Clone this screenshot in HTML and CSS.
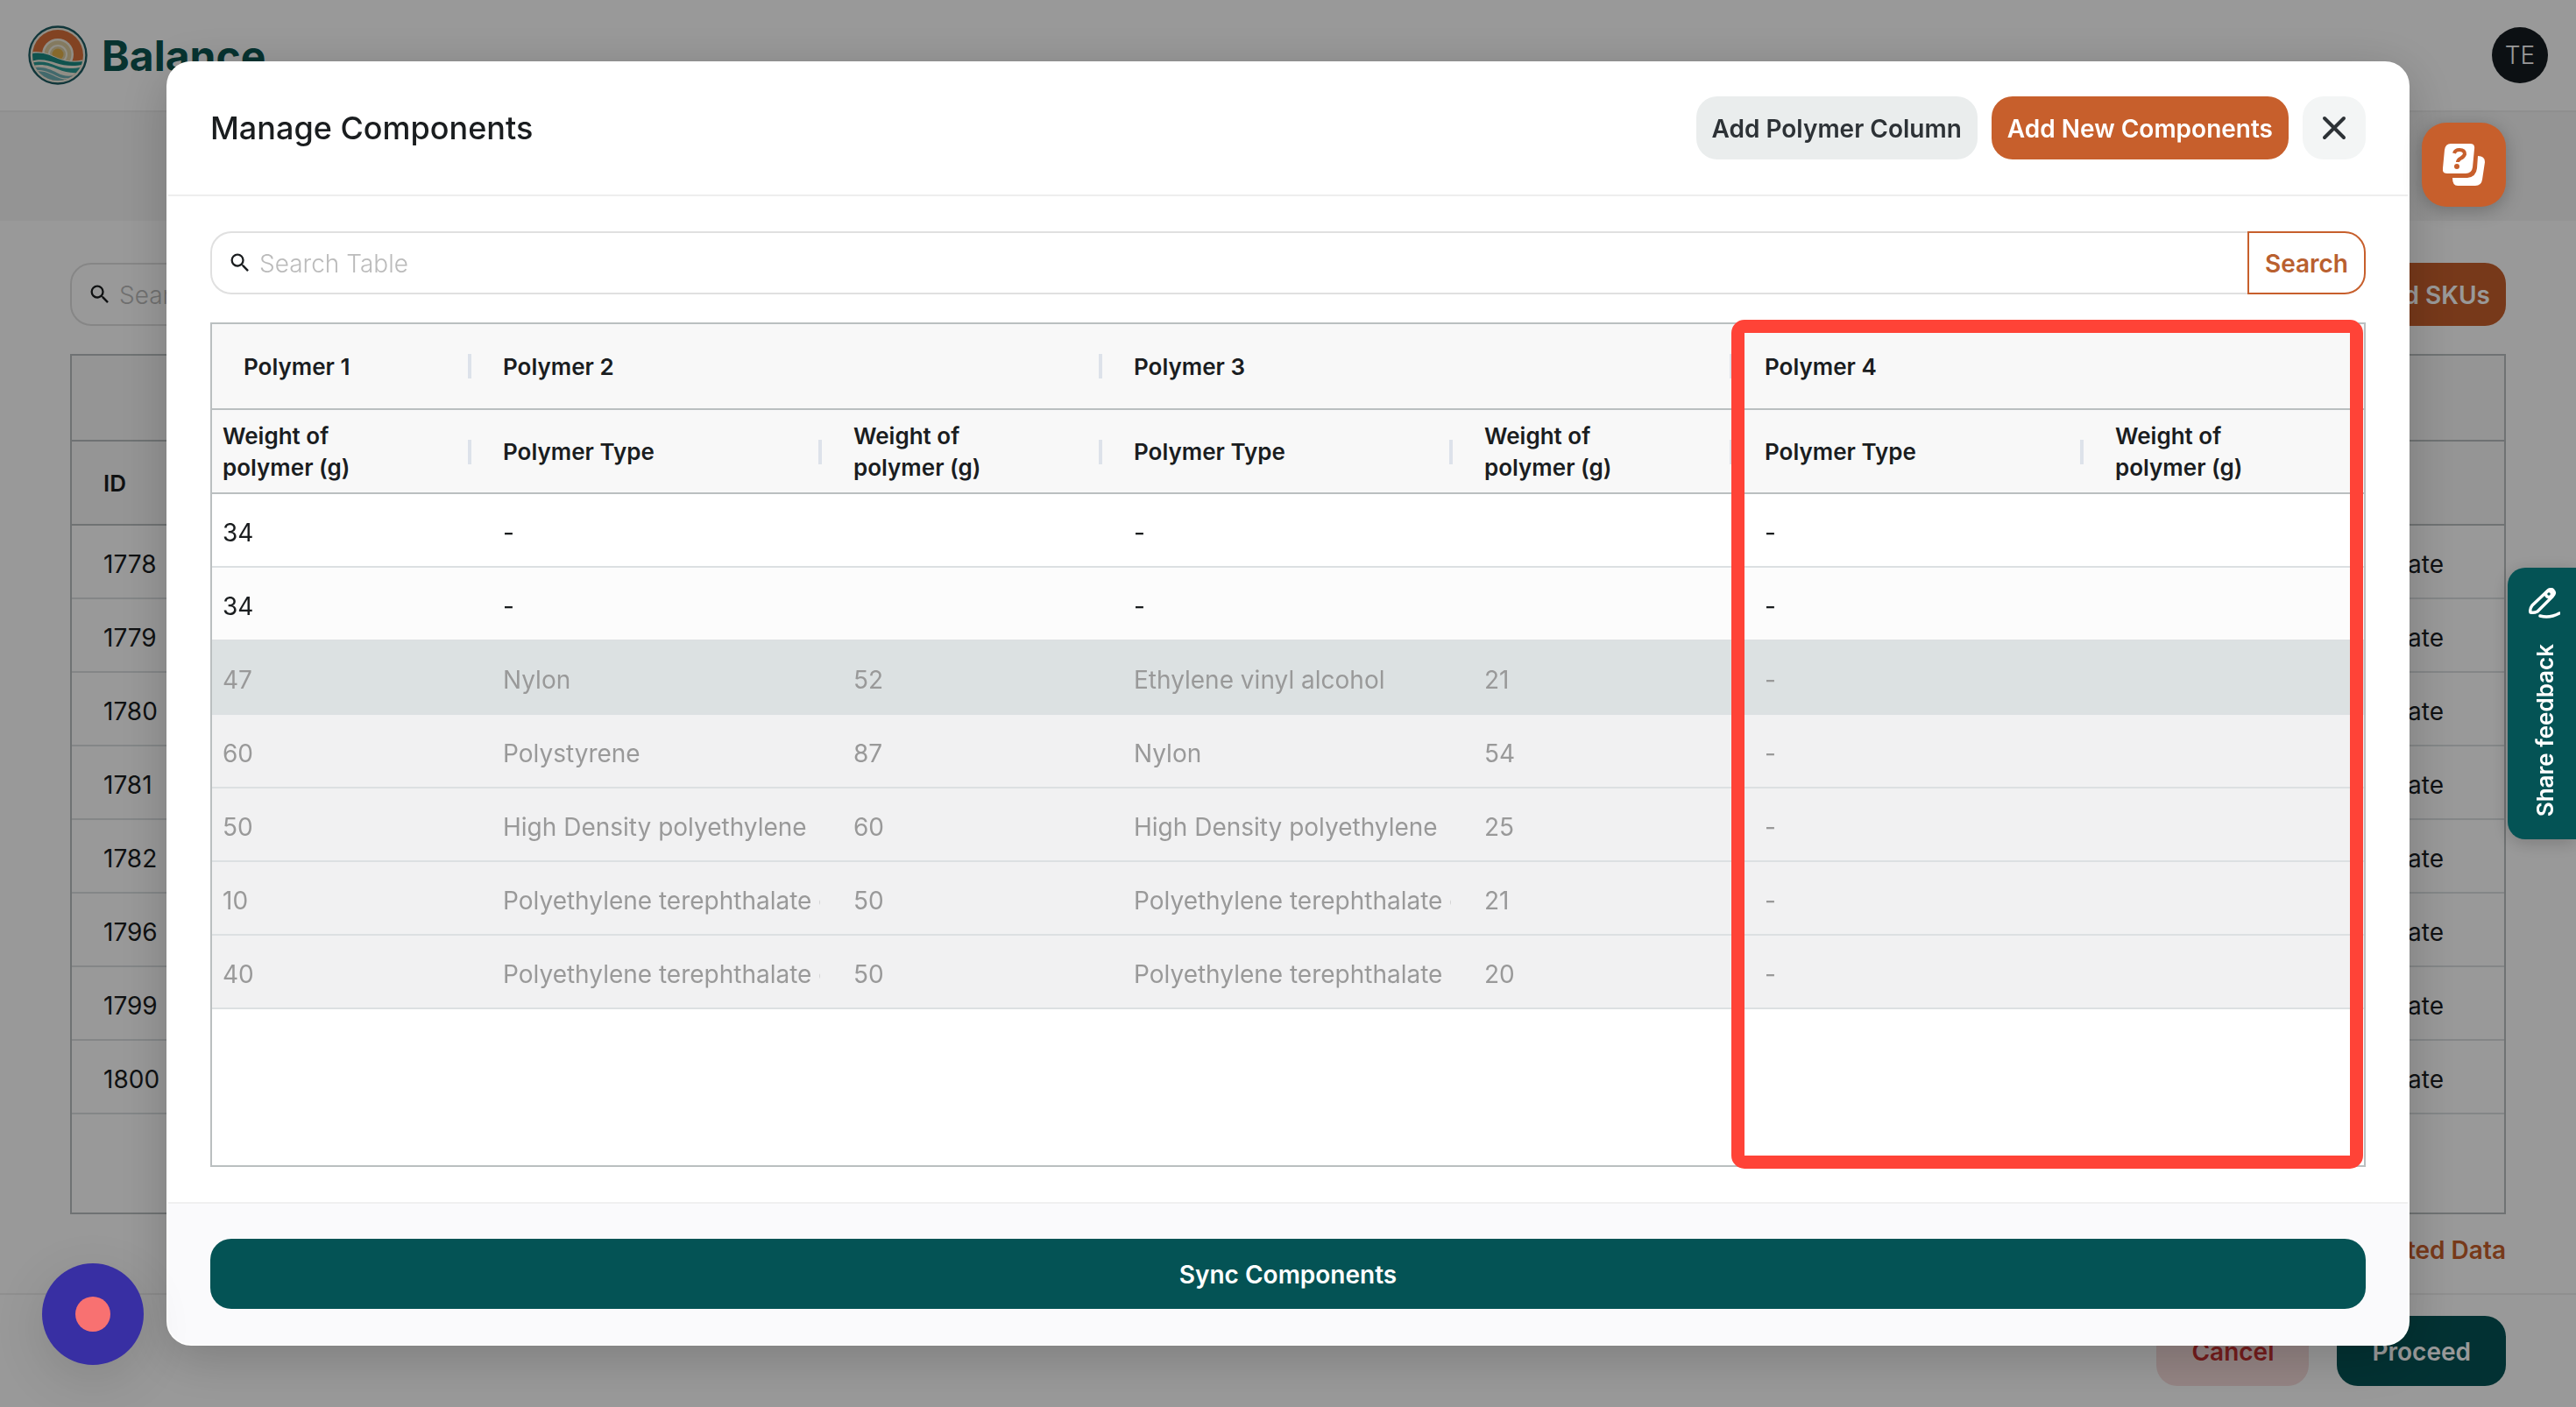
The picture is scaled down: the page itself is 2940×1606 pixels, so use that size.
FILE: index.html
```html
<!DOCTYPE html>
<html lang="en">
<head>
  <meta charset="UTF-8">
  <meta name="viewport" content="width=device-width, initial-scale=1.0">
  <title>Balance - Manage Components</title>
  <link rel="stylesheet" href="styles.css">
</head>
<body>
  <div class="page">
    <header class="topbar">
      <a class="brand" href="#">
        <svg class="brand-logo" viewBox="0 0 68 68" aria-hidden="true">
          <defs>
            <clipPath id="disc"><circle cx="34" cy="34" r="29"/></clipPath>
          </defs>
          <circle cx="34" cy="34" r="32.5" fill="#f1ede0" stroke="#1d5c63" stroke-width="2.4"/>
          <g clip-path="url(#disc)">
            <rect width="68" height="68" fill="#d9713a"/>
            <circle cx="34" cy="33" r="18" fill="#f1ede0"/>
            <circle cx="34" cy="33" r="15.5" fill="#dccb9f"/>
            <circle cx="34" cy="33" r="11" fill="#f1ede0"/>
            <circle cx="34" cy="33" r="9" fill="#dccb9f"/>
            <circle cx="34" cy="33" r="6.5" fill="#e2b04a"/>
            <path d="M0 31C16 28 24 33 34 37S54 42 68 38V68H0Z" fill="#f1ede0"/>
            <path d="M0 33C16 29 24 34 34 38S54 43 68 40V43C54 48 42 46 32 43S14 37 0 42Z" fill="#1c8a83"/>
            <path d="M0 44C14 39 22 42 32 46S52 50 68 46V52C54 56 44 54 34 50S16 43 0 47Z" fill="#2b9a93"/>
            <path d="M0 50C12 45 24 49 33 54S48 58 60 56V68H0Z" fill="#6fb0b5"/>
            <path d="M4 53C14 49 24 54 32 58S44 61 54 60" fill="none" stroke="#f1ede0" stroke-width="1.2"/>
          </g>
        </svg>
        <span>Balance</span>
      </a>
      <button class="avatar" type="button">TE</button>
    </header>
    <div class="subbar"></div>

    <main class="content">
      <div class="toolbar">
        <div class="search">
          <div class="search-field">
            <svg class="search-icon" viewBox="0 0 24 24" aria-hidden="true"><path d="M15.5 14h-.79l-.28-.27A6.47 6.47 0 0 0 16 9.500 6.500 6.500 0 1 0 9.500 16c1.610 0 3.090-.59 4.230-1.570l.27.28v.79l5 4.990L20.490 19zm-6 0C7.010 14 5 11.990 5 9.500S7.010 5 9.500 5 14 7.010 14 9.500 11.990 14 9.500 14z"/></svg>
            <input type="text" placeholder="Search Table" aria-label="Search SKUs">
          </div>
        </div>
        <button class="btn btn-orange" type="button">Add SKUs</button>
      </div>

      <div class="table-wrap">
        <table class="grid sku-grid">
          <thead>
            <tr><th></th><th></th></tr>
            <tr><th>ID</th><th></th></tr>
          </thead>
          <tbody>
            <tr><td>1778</td><td>Update</td></tr>
            <tr><td>1779</td><td>Update</td></tr>
            <tr><td>1780</td><td>Update</td></tr>
            <tr><td>1781</td><td>Update</td></tr>
            <tr><td>1782</td><td>Update</td></tr>
            <tr><td>1796</td><td>Update</td></tr>
            <tr><td>1799</td><td>Update</td></tr>
            <tr><td>1800</td><td>Update</td></tr>
          </tbody>
        </table>
      </div>
      <a class="data-link" href="#">Deleted Data</a>
    </main>

    <footer class="page-footer">
      <button class="btn btn-large btn-cancel" type="button">Cancel</button>
      <button class="btn btn-large btn-green" type="button">Proceed</button>
    </footer>
  </div>

  <div class="overlay">
    <div class="modal" role="dialog" aria-modal="true" aria-labelledby="modal-title">
      <div class="modal-header">
        <h1 id="modal-title">Manage Components</h1>
        <div class="modal-actions">
          <button class="btn btn-light" type="button">Add Polymer Column</button>
          <button class="btn btn-orange" type="button">Add New Components</button>
          <button class="btn-close" type="button" aria-label="Close">
            <svg viewBox="0 0 28 28" aria-hidden="true"><path d="M3 3L25 25M25 3L3 25"/></svg>
          </button>
        </div>
      </div>

      <div class="modal-body">
        <div class="search">
          <div class="search-field attached">
            <svg class="search-icon" viewBox="0 0 24 24" aria-hidden="true"><path d="M15.5 14h-.79l-.28-.27A6.47 6.47 0 0 0 16 9.500 6.500 6.500 0 1 0 9.500 16c1.610 0 3.090-.59 4.230-1.570l.27.28v.79l5 4.990L20.490 19zm-6 0C7.010 14 5 11.990 5 9.500S7.010 5 9.500 5 14 7.010 14 9.500 11.990 14 9.500 14z"/></svg>
            <input type="text" placeholder="Search Table" aria-label="Search components">
          </div>
          <button class="btn btn-search" type="button">Search</button>
        </div>

        <div class="table-wrap">
          <table class="grid component-grid">
            <colgroup>
              <col class="col-first">
              <col class="col-type"><col class="col-weight">
              <col class="col-type"><col class="col-weight">
              <col class="col-type"><col>
            </colgroup>
            <thead>
              <tr>
                <th class="group-first">Polymer 1</th>
                <th colspan="2">Polymer 2</th>
                <th colspan="2">Polymer 3</th>
                <th colspan="2">Polymer 4</th>
              </tr>
              <tr>
                <th>Weight of<br>polymer (g)</th>
                <th>Polymer Type</th>
                <th>Weight of<br>polymer (g)</th>
                <th>Polymer Type</th>
                <th>Weight of<br>polymer (g)</th>
                <th>Polymer Type</th>
                <th>Weight of<br>polymer (g)</th>
              </tr>
            </thead>
            <tbody>
              <tr><td>34</td><td>-</td><td></td><td>-</td><td></td><td>-</td><td></td></tr>
              <tr class="even"><td>34</td><td>-</td><td></td><td>-</td><td></td><td>-</td><td></td></tr>
              <tr class="disabled hovered"><td>47</td><td>Nylon</td><td>52</td><td>Ethylene vinyl alcohol</td><td>21</td><td>-</td><td></td></tr>
              <tr class="disabled"><td>60</td><td>Polystyrene</td><td>87</td><td>Nylon</td><td>54</td><td>-</td><td></td></tr>
              <tr class="disabled"><td>50</td><td>High Density polyethylene</td><td>60</td><td>High Density polyethylene</td><td>25</td><td>-</td><td></td></tr>
              <tr class="disabled"><td>10</td><td>Polyethylene terephthalate g</td><td>50</td><td>Polyethylene terephthalate g</td><td>21</td><td>-</td><td></td></tr>
              <tr class="disabled"><td>40</td><td>Polyethylene terephthalate g</td><td>50</td><td>Polyethylene terephthalate</td><td>20</td><td>-</td><td></td></tr>
            </tbody>
          </table>
          <div class="highlight"></div>
        </div>
      </div>

      <div class="modal-footer">
        <button class="btn btn-large btn-green" type="button">Sync Components</button>
      </div>
    </div>
  </div>

  <button class="help-button" type="button" aria-label="Help">
    <svg viewBox="0 0 48 48" aria-hidden="true">
      <path d="M9 0H31Q37 0 36 6L34 27Q33 34 26 34H5Q-1 34 0 28L2 7Q3 0 9 0Z" fill="#fff"/>
      <path d="M40 14Q48 14 48 21L45 41Q44 48 37 48H17Q11 48 11 39H28Q38 38 39 28Z" fill="#fff"/>
      <path d="M13 11Q14 7 19 7Q25 7 25 12Q24 15 20 17Q17 19 17 21" fill="none" stroke="#c75f2c" stroke-width="4"/>
      <circle cx="16" cy="26" r="3" fill="#c75f2c"/>
    </svg>
  </button>

  <button class="feedback-tab" type="button">
    <svg viewBox="0 0 36 36" aria-hidden="true">
      <path d="M22 3Q26 0 28 3Q31 6 27 10L10 27Q6 29 2 28Q1 24 4 20Z"/>
      <circle cx="23" cy="7" r="3.500"/>
      <path d="M13 32Q24 35 35 29"/>
    </svg>
    <span>Share feedback</span>
  </button>

  <button class="record-button" type="button" aria-label="Record"><span></span></button>
</body>
</html>
```
FILE: styles.css
```css
* {
  box-sizing: border-box;
}
body {
  margin: 0;
  font-family: Inter, "Open Sans", sans-serif;
  font-size: 28px;
  color: #1a1d1f;
  background-color: #fff;
}
button, input {
  font-family: inherit;
  font-size: inherit;
}
button {
  border: none;
  padding: 0;
  cursor: pointer;
}
.page {
  display: flex;
  flex-direction: column;
  height: 100vh;
}
.topbar {
  display: flex;
  align-items: center;
  justify-content: space-between;
  height: 128px;
  padding: 0 32px;
  border-bottom: 2px solid #eee;
}
.brand {
  display: flex;
  align-items: center;
  gap: 16px;
  font-size: 48px;
  font-weight: 700;
  color: #0c5551;
  text-decoration: none;
}
.brand-logo {
  width: 68px;
  height: 68px;
}
.avatar {
  width: 64px;
  height: 64px;
  border-radius: 50%;
  background-color: #151c20;
  color: #fff;
  font-weight: 300;
}
.subbar {
  height: 124px;
  background-color: #f7f7f7;
}
.content {
  flex: 1;
  display: flex;
  flex-direction: column;
  padding: 48px 80px 28px;
}
.toolbar {
  display: flex;
  justify-content: space-between;
  gap: 32px;
  margin-bottom: 32px;
}
.search {
  display: flex;
  flex: 1;
}
.search-field {
  flex: 1;
  display: flex;
  align-items: center;
  gap: 8px;
  height: 72px;
  padding: 0 18px;
  border: 2px solid #e0e0e0;
  border-radius: 24px;
}
.search-field.attached {
  border-right: none;
  border-radius: 24px 0 0 24px;
}
.search-icon {
  width: 28px;
  height: 28px;
  fill: #1a1d1f;
}
.search-field input {
  flex: 1;
  border: none;
  outline: none;
  padding: 2px 0 0;
  background: transparent;
  font-weight: 300;
}
.search-field input::placeholder {
  color: #bbb;
}
.btn {
  height: 72px;
  padding: 2px 18px 0;
  border-radius: 24px;
  font-weight: 600;
  white-space: nowrap;
}
.btn-large {
  height: 80px;
  padding: 2px 40px 0;
}
.btn-orange {
  background-color: #c75f2c;
  color: #fff;
}
.btn-light {
  background-color: #eaeded;
  color: #2d3236;
}
.btn-green {
  background-color: #045355;
  color: #fff;
}
.btn-cancel {
  background-color: #f6dcdb;
  color: #c22f2f;
}
.btn-search {
  border: 2px solid #c75f2c;
  border-radius: 0 24px 24px 0;
  background-color: #fff;
  color: #b9602f;
}

/* tables */
.table-wrap {
  position: relative;
  flex: 1;
  border: 2px solid #babfc0;
}
.grid {
  width: 100%;
  border-spacing: 0;
  table-layout: fixed;
}
.grid th {
  position: relative;
  height: 96px;
  padding: 2px 0 0 38px;
  border-bottom: 2px solid #babfc0;
  background-color: #f8f8f8;
  font-size: 26px;
  font-weight: 600;
  line-height: 36px;
  text-align: left;
}
.grid tr:first-child th {
  height: 98px;
}
.grid td {
  height: 84px;
  padding: 6px 0 0 38px;
  border-bottom: 2px solid #dce0e2;
  line-height: 40px;
  overflow: hidden;
  white-space: nowrap;
}
.sku-grid th, .sku-grid td {
  padding-left: 36px;
}
.sku-grid td:last-child {
  padding-right: 69px;
  text-align: right;
}
.component-grid th:not(:last-child)::after {
  content: "";
  position: absolute;
  top: 34px;
  right: -2px;
  width: 4px;
  height: 28px;
  background-color: #dde2ea;
  z-index: 1;
}
.component-grid th:first-child, .component-grid td:first-child {
  padding-left: 12px;
}
.component-grid .group-first:first-child {
  padding-left: 36px;
}
.col-first {
  width: 294px;
}
.col-type {
  width: 400px;
}
.col-weight {
  width: 320px;
}
.even td {
  background-color: #fcfcfc;
}
.disabled td {
  background-color: #f1f1f2;
  color: #999;
}
.hovered td {
  background-color: #dce1e2;
}
.highlight {
  position: absolute;
  top: -5px;
  right: 1px;
  bottom: -4px;
  left: 1734px;
  border: 15px solid #ff4337;
  border-radius: 15px;
  z-index: 2;
}
.data-link {
  align-self: flex-end;
  margin-top: 20px;
  line-height: 42px;
  font-weight: 600;
  color: #c75f2c;
  text-decoration: none;
}
.page-footer {
  display: flex;
  justify-content: flex-end;
  gap: 32px;
  padding: 24px 80px;
  border-top: 2px solid #eee;
}

/* modal */
.overlay {
  position: fixed;
  inset: 0;
  display: flex;
  padding: 70px 190px;
  background-color: rgba(0, 0, 0, 0.4);
}
.modal {
  flex: 1;
  display: flex;
  flex-direction: column;
  border: 2px solid #fff;
  border-radius: 28px;
  background-color: #fff;
  box-shadow: 0 12px 60px rgba(0, 0, 0, 0.2);
  overflow: hidden;
}
.modal-header {
  display: flex;
  align-items: center;
  justify-content: space-between;
  padding: 38px 48px 40px;
  border-bottom: 2px solid #eee;
}
.modal-header h1 {
  margin: 0;
  font-size: 36px;
  font-weight: 500;
}
.modal-actions {
  display: flex;
  gap: 16px;
}
.btn-close {
  display: flex;
  align-items: center;
  justify-content: center;
  width: 72px;
  height: 72px;
  border-radius: 24px;
  background-color: #f3f5f5;
}
.btn-close svg {
  width: 28px;
  height: 28px;
  fill: none;
  stroke: #2d3236;
  stroke-width: 4;
  stroke-linecap: round;
}
.modal-body {
  flex: 1;
  display: flex;
  flex-direction: column;
  gap: 32px;
  padding: 40px 48px;
}
.modal-body .search {
  flex: none;
}
.modal-footer {
  display: flex;
  padding: 40px 48px;
  border-top: 2px solid #f0f0f0;
  background-color: #fafafc;
}
.modal-footer .btn {
  flex: 1;
}

/* floating widgets */
.help-button {
  position: fixed;
  top: 140px;
  right: 80px;
  display: flex;
  align-items: center;
  justify-content: center;
  width: 96px;
  height: 96px;
  border-radius: 28px;
  background-color: #c75f2c;
  box-shadow: 0 4px 20px rgba(0, 0, 0, 0.25);
}
.help-button svg {
  width: 48px;
  height: 48px;
}
.feedback-tab {
  position: fixed;
  top: 648px;
  right: 0;
  display: flex;
  flex-direction: column;
  align-items: center;
  gap: 28px;
  width: 78px;
  height: 310px;
  padding: 23px 0 0 6px;
  border-radius: 20px 0 0 20px;
  background-color: #045355;
  color: #fff;
  font-size: 26px;
  font-weight: 600;
  box-shadow: 0 4px 20px rgba(0, 0, 0, 0.2);
}
.feedback-tab svg {
  width: 36px;
  height: 36px;
  fill: none;
  stroke: #fff;
  stroke-width: 3.5;
  stroke-linecap: round;
  stroke-linejoin: round;
}
.feedback-tab span {
  writing-mode: vertical-rl;
  transform: rotate(180deg);
}
.record-button {
  position: fixed;
  bottom: 48px;
  left: 48px;
  display: flex;
  align-items: center;
  justify-content: center;
  width: 116px;
  height: 116px;
  border-radius: 50%;
  background-color: #382fa3;
  box-shadow: 0 16px 60px rgba(0, 0, 0, 0.12);
}
.record-button span {
  width: 40px;
  height: 40px;
  border-radius: 50%;
  background-color: #f87171;
}
```
